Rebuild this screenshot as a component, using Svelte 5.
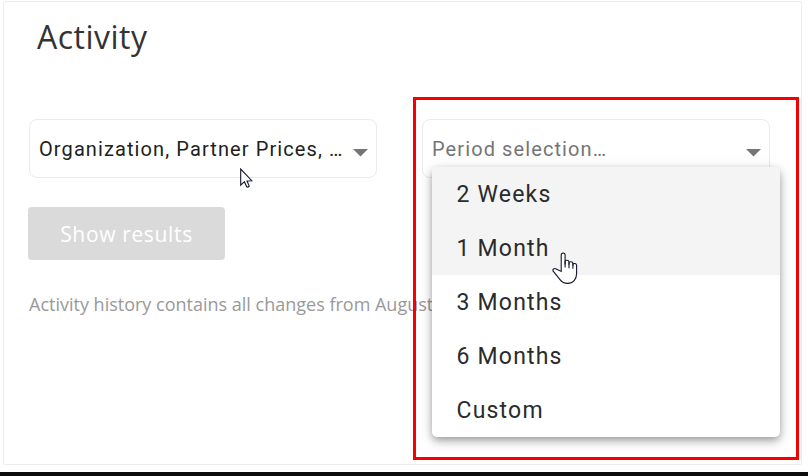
<script lang="ts">
	const periods = ['2 Weeks', '1 Month', '3 Months', '6 Months', 'Custom'];

	let selected = 0;
	let hovered = 1;
</script>

<main>
	<section class="card">
		<h1>Activity</h1>

		<div class="filters">
			<div class="select">
				<span class="value">Organization, Partner Prices, …</span>
				<svg class="arrow" width="15" height="8" viewBox="0 0 15 8">
					<path d="M0 0h15L7.5 7.5z" />
				</svg>
			</div>

			<div class="select">
				<span class="value placeholder">Period selection…</span>
				<svg class="arrow" width="15" height="8" viewBox="0 0 15 8">
					<path d="M0 0h15L7.5 7.5z" />
				</svg>
				<ul class="menu">
					{#each periods as period, i}
						<li class:active={i === selected || i === hovered}>
							<span>{period}</span>
						</li>
					{/each}
				</ul>
			</div>
		</div>

		<button disabled>Show results</button>
		<p>Activity history contains all changes from August</p>
	</section>

	<div class="highlight"></div>
	<footer></footer>

	<svg class="cursor pointer" width="13" height="21" viewBox="0 0 13 21">
		<path d="M.7 1v16.2l3.7-3.5 2.3 5.1q1.2.8 2.5-.7L7 13l4.8-.3z" />
	</svg>

	<svg class="cursor hand" width="26" height="33" viewBox="0 0 26 33">
		<path
			d="M9.2 19.4V3.2C9.2.2 13.1.2 13.1 3.2v9.2-3c.4-1.7 3.5-1.5 3.9.4v3-2c.5-1.6 3.5-1.3 3.9.4v2.3-1.3c.8-1.3 3.6-.8 3.7 1v8.4c0 5.8-3.5 9.8-9 9.8-3.6 0-5.7-1.2-7.6-3.8L1.2 19.2c-1.1-2 1-3.2 3-2.3z"
		/>
		<path d="M13.1 9v6.6M17 10.4v5.8M20.9 11.4v5.4" />
	</svg>
</main>

<style>
	:global(body) {
		margin: 0;
		background: #fff;
	}

	main {
		position: relative;
		display: flex;
		flex-direction: column;
		box-sizing: border-box;
		width: 808px;
		height: 476px;
		padding: 1px 6px 0 3px;
		overflow: hidden;
		font-family: 'Open Sans', sans-serif;
	}

	.card {
		box-sizing: border-box;
		height: 464px;
		padding: 0 25px;
		border: 1px solid #ededed;
		border-radius: 2px;
	}

	h1 {
		margin: 13px 0 0 8px;
		color: #333;
		font-size: 32px;
		font-weight: 400;
		line-height: 44px;
		letter-spacing: 0.5px;
	}

	.filters {
		display: flex;
		gap: 45px;
		margin-top: 60px;
	}

	.select {
		position: relative;
		display: flex;
		align-items: center;
		justify-content: space-between;
		box-sizing: border-box;
		flex: none;
		width: 348px;
		height: 59px;
		padding: 0 8px 0 9px;
		border: 1px solid #ebebeb;
		border-radius: 8px;
		font-family: Roboto, sans-serif;
		font-size: 20px;
		letter-spacing: 1.1px;
	}

	.value {
		color: #212121;
		white-space: nowrap;
	}

	.placeholder {
		color: #757575;
	}

	.arrow {
		margin-top: 8px;
		fill: #757575;
	}

	.menu {
		position: absolute;
		top: 47px;
		left: 9px;
		width: 348px;
		margin: 0;
		padding: 0;
		overflow: hidden;
		border-radius: 5px;
		background: #fff;
		box-shadow:
			0 3px 7px -1px rgba(0, 0, 0, 0.28),
			0 5px 12px 0 rgba(0, 0, 0, 0.16),
			0 1px 16px 0 rgba(0, 0, 0, 0.08);
		list-style: none;
		z-index: 2;
	}

	.menu li {
		box-sizing: border-box;
		height: 54px;
		padding: 1px 24.5px 0;
		color: #2b2b2b;
		font-size: 23px;
		line-height: 54px;
		letter-spacing: 1.2px;
	}

	.menu .active {
		background: #f4f4f4;
	}

	button {
		display: block;
		width: 197px;
		height: 53px;
		margin: 29px 0 0 -1px;
		padding: 0;
		border: 0;
		border-radius: 4px;
		background: #dadada;
		color: #fff;
		font-family: inherit;
		font-size: 21px;
		letter-spacing: 0.65px;
	}

	p {
		margin: 31px 0 0;
		color: #999;
		font-size: 18px;
		line-height: 26px;
		white-space: nowrap;
	}

	.highlight {
		position: absolute;
		top: 97px;
		left: 413px;
		box-sizing: border-box;
		width: 386px;
		height: 363px;
		border: 3px solid #f80000;
	}

	footer {
		height: 4px;
		margin: 7px -6px 0 -3px;
		background: #0c0c0c;
	}

	.cursor {
		position: absolute;
		z-index: 3;
		fill: #fff;
		stroke: #14142b;
		stroke-width: 1.1;
	}

	.pointer {
		top: 168px;
		left: 240px;
	}

	.hand {
		top: 252px;
		left: 552px;
	}
</style>
